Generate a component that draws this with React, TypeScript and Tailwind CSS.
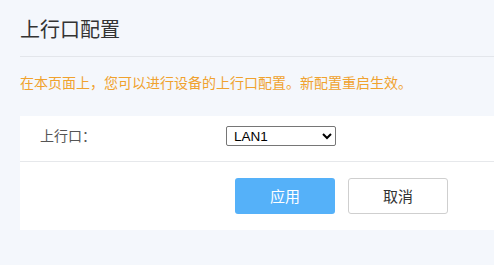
export default function App() {
  return (
    <div
      className="w-[494px] h-[265px] bg-[#f4f7fc] pl-5 pt-[18px] overflow-hidden"
      style={{ fontFamily: '"Noto Sans CJK SC", "Liberation Sans", sans-serif' }}
    >
      <h1 className="text-[20px] leading-[22px] text-[#333] font-normal h-[38px]">上行口配置</h1>
      <div className="h-px bg-[#e3e6eb]" />
      <p className="mt-[16px] text-[14px] leading-[18px] text-[#f0a22e]">
        在本页面上，您可以进行设备的上行口配置。新配置重启生效。
      </p>

      <div className="mt-[25px] bg-white">
        <div className="h-[46px] flex items-center border-b border-[#e6e8eb]">
          <span className="w-[206px] pl-5 text-[14px] text-[#555] -mt-[6px]">上行口：</span>
          <select
            className="w-[110px] h-[20px] -mt-[5px] border border-[#767676] rounded-[2px] text-[13.5px] text-black pl-[3px] bg-white"
            style={{ fontFamily: '"Liberation Sans", Arial, sans-serif' }}
            defaultValue="LAN1"
          >
            <option>LAN1</option>
            <option>LAN2</option>
          </select>
        </div>
        <div className="h-[68px] flex items-start pt-[16px] pl-[215px] gap-[13px]">
          <button className="w-[100px] h-[36px] rounded-[3px] bg-[#55b1f9] text-white text-[15px]">
            应用
          </button>
          <button className="w-[100px] h-[36px] rounded-[3px] border border-[#cfcfcf] bg-white text-[#333] text-[15px]">
            取消
          </button>
        </div>
      </div>
    </div>
  );
}
